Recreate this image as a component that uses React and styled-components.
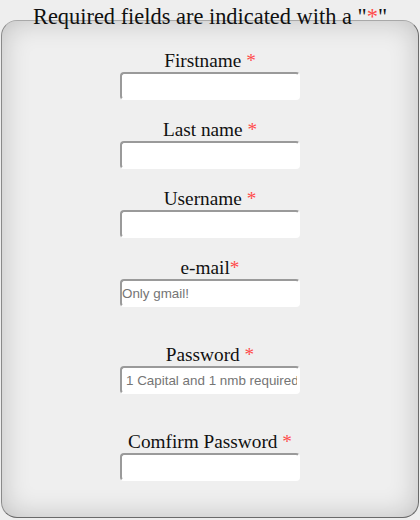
import React from "react";
import styled, { createGlobalStyle } from "styled-components";

const GlobalStyle = createGlobalStyle`
  body {
    margin: 0;
    background: #eeeeee;
    font-family: "Liberation Serif", "Times New Roman", serif;
  }
`;

const Page = styled.div`
  width: 420px;
  height: 520px;
  padding-top: 4px;
  box-sizing: border-box;
`;

const Heading = styled.h1`
  margin: 0;
  font-size: 22.4px;
  font-weight: normal;
  line-height: 26px;
  text-align: center;
  color: #111;
`;

const Star = styled.span`
  color: #ff4a4a;
`;

const Card = styled.form`
  margin: -10px 1px 0;
  height: 498px;
  box-sizing: border-box;
  padding-top: 29px;
  border: 1px solid #6a6a6a;
  border-top-color: #a8a8a8;
  border-left-color: #8a8a8a;
  border-radius: 16px;
  background: #efefef;
  box-shadow: inset 0 0 28px rgba(0, 0, 0, 0.2);
  display: flex;
  flex-direction: column;
  align-items: center;
`;

const Field = styled.div`
  display: flex;
  flex-direction: column;
  align-items: center;
  margin-top: ${(props) => (props.wide ? "37px" : props.first ? "0" : "19px")};
`;

const Label = styled.label`
  font-size: 19.3px;
  line-height: 22px;
  color: #111;
`;

const Input = styled.input`
  width: 180px;
  height: 28px;
  box-sizing: border-box;
  margin: 0;
  padding: 1px 1px 1px ${(props) => props.indent || 0}px;
  border: 2px solid #fff;
  border-top-color: #9a9a9a;
  border-left-color: #9a9a9a;
  border-radius: 4px;
  background: #fff;
  font-family: "Liberation Sans", Arial, sans-serif;
  font-size: 13.4px;
  outline: 0;

  ::placeholder {
    color: #757575;
  }
`;

const fields = [
  { label: "Firstname", gap: true },
  { label: "Last name", gap: true },
  { label: "Username", gap: true },
  { label: "e-mail", gap: false, placeholder: "Only gmail!", type: "email" },
  { label: "Password", gap: true, placeholder: "1 Capital and 1 nmb required", type: "password", wide: true, indent: 4 },
  { label: "Comfirm Password", gap: true, type: "password", wide: true },
];

const App = () => {
  return (
    <Page>
      <GlobalStyle />
      <Heading>
        Required fields are indicated with a "<Star>*</Star>"
      </Heading>
      <Card onSubmit={(e) => e.preventDefault()}>
        {fields.map((f, i) => (
          <Field key={f.label} first={i === 0} wide={f.wide}>
            <Label>
              {f.label}
              {f.gap ? " " : ""}
              <Star>*</Star>
            </Label>
            <Input type={f.type || "text"} placeholder={f.placeholder} indent={f.indent} />
          </Field>
        ))}
      </Card>
    </Page>
  );
};

export default App;
